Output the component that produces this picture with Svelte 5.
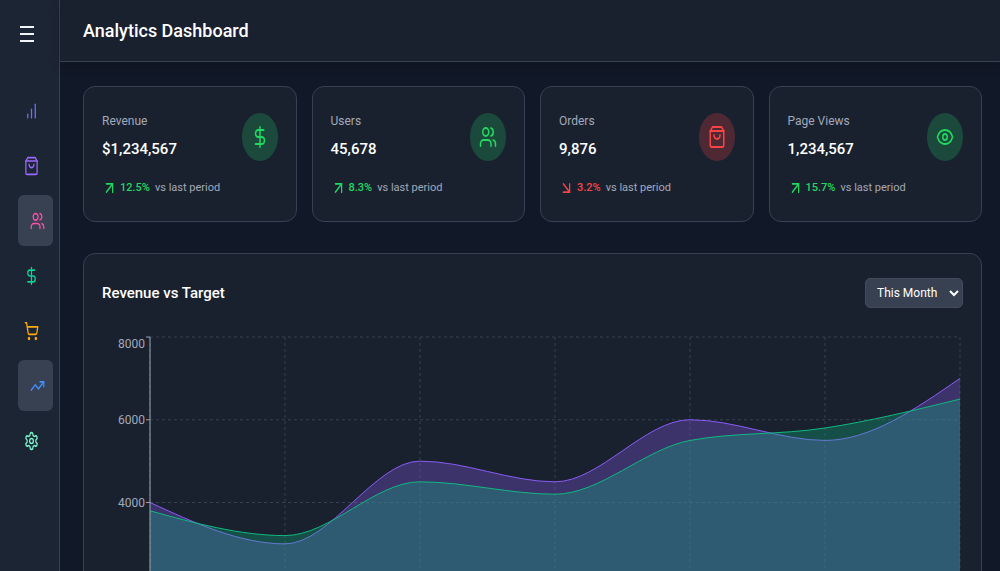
<script lang="ts">
    type Icon = "bars" | "bag" | "users" | "dollar" | "cart" | "trend" | "gear" | "eye" | "up" | "down";

    const icons: Record<Icon, string[]> = {
        bars: ["M12 20V10", "M18 20V4", "M6 20v-4"],
        bag: [
            "M6 2 3 6v14a2 2 0 0 0 2 2h14a2 2 0 0 0 2-2V6l-3-4Z",
            "M3 6h18",
            "M16 10a4 4 0 0 1-8 0",
        ],
        users: [
            "M16 21v-2a4 4 0 0 0-4-4H6a4 4 0 0 0-4 4v2",
            "M13 7a4 4 0 1 1-8 0 4 4 0 0 1 8 0",
            "M22 21v-2a4 4 0 0 0-3-3.87",
            "M16 3.13a4 4 0 0 1 0 7.75",
        ],
        dollar: ["M12 2v20", "M17 5H9.5a3.5 3.5 0 0 0 0 7h5a3.5 3.5 0 0 1 0 7H6"],
        cart: [
            "M9 21a1 1 0 1 1-2 0 1 1 0 0 1 2 0",
            "M20 21a1 1 0 1 1-2 0 1 1 0 0 1 2 0",
            "M2.05 2.05h2l2.66 12.42a2 2 0 0 0 2 1.58h9.78a2 2 0 0 0 1.95-1.57l1.65-7.43H5.12",
        ],
        trend: ["M22 7l-8.5 8.5-5-5L2 17", "M16 7h6v6"],
        gear: [
            "M12.22 2h-.44a2 2 0 0 0-2 2v.18a2 2 0 0 1-1 1.73l-.43.25a2 2 0 0 1-2 0l-.15-.08a2 2 0 0 0-2.73.73l-.22.38a2 2 0 0 0 .73 2.73l.15.1a2 2 0 0 1 1 1.72v.51a2 2 0 0 1-1 1.74l-.15.09a2 2 0 0 0-.73 2.73l.22.38a2 2 0 0 0 2.73.73l.15-.08a2 2 0 0 1 2 0l.43.25a2 2 0 0 1 1 1.73V20a2 2 0 0 0 2 2h.44a2 2 0 0 0 2-2v-.18a2 2 0 0 1 1-1.73l.43-.25a2 2 0 0 1 2 0l.15.08a2 2 0 0 0 2.73-.73l.22-.39a2 2 0 0 0-.73-2.73l-.15-.08a2 2 0 0 1-1-1.74v-.5a2 2 0 0 1 1-1.74l.15-.09a2 2 0 0 0 .73-2.73l-.22-.38a2 2 0 0 0-2.73-.73l-.15.08a2 2 0 0 1-2 0l-.43-.25a2 2 0 0 1-1-1.73V4a2 2 0 0 0-2-2z",
            "M15 12a3 3 0 1 1-6 0 3 3 0 0 1 6 0",
        ],
        eye: [
            "M2.06 12.35a1 1 0 0 1 0-.7 10.75 10.75 0 0 1 19.88 0 1 1 0 0 1 0 .7 10.75 10.75 0 0 1-19.88 0",
            "M15 12a3 3 0 1 1-6 0 3 3 0 0 1 6 0",
        ],
        up: ["M7 7h10v10", "M7 17 17 7"],
        down: ["m7 7 10 10", "M17 7v10H7"],
    };

    const navItems: { icon: Icon; label: string; color: string; active?: boolean }[] = [
        { icon: "bars", label: "Overview", color: "#6e71ff" },
        { icon: "bag", label: "Products", color: "#9c68ff" },
        { icon: "users", label: "Users", color: "#fb50a8", active: true },
        { icon: "dollar", label: "Sales", color: "#10d094" },
        { icon: "cart", label: "Orders", color: "#ffaa0c" },
        { icon: "trend", label: "Analytics", color: "#3f8dff", active: true },
        { icon: "gear", label: "Settings", color: "#78f5c8" },
    ];

    const stats: { title: string; value: string; change: string; rising: boolean; icon: Icon }[] = [
        { title: "Revenue", value: "$1,234,567", change: "12.5%", rising: true, icon: "dollar" },
        { title: "Users", value: "45,678", change: "8.3%", rising: true, icon: "users" },
        { title: "Orders", value: "9,876", change: "3.2%", rising: false, icon: "bag" },
        { title: "Page Views", value: "1,234,567", change: "15.7%", rising: true, icon: "eye" },
    ];

    const revenue = [4000, 3000, 5000, 4500, 6000, 5500, 7000];
    const target = [3800, 3200, 4500, 4200, 5500, 5800, 6500];
    const ticks = [8000, 6000, 4000];

    const plot = { left: 48, top: 5, right: 3, height: 331 };
    let range = $state("This Month");
    let width = $state(862);

    let plotRight = $derived(width - plot.right);
    let step = $derived((plotRight - plot.left) / (revenue.length - 1));

    const y = (v: number) => plot.top + plot.height * (1 - v / 8000);

    // Monotone cubic through evenly spaced points
    function curve(values: number[], dx: number) {
        const ys = values.map(y);
        const slopes = ys.slice(1).map((v, i) => (v - ys[i]) / dx);
        const last = ys.length - 1;
        const m = ys.map((_, i) => {
            if (i === 0 || i === last) return 0;
            const a = slopes[i - 1];
            const b = slopes[i];
            if (a * b <= 0) return 0;
            return Math.sign(a) * Math.min(Math.abs(a), Math.abs(b), Math.abs(a + b) / 4) * 2;
        });
        m[0] = (3 * slopes[0] - m[1]) / 2;
        m[last] = (3 * slopes[last - 1] - m[last - 1]) / 2;
        let d = `M${plot.left},${ys[0]}`;
        for (let i = 0; i < last; i++) {
            const x0 = plot.left + i * dx;
            const t = dx / 3;
            d += `C${x0 + t},${ys[i] + m[i] * t} ${x0 + dx - t},${ys[i + 1] - m[i + 1] * t} ${x0 + dx},${ys[i + 1]}`;
        }
        return d;
    }

    let series = $derived([
        { color: "#8b5cf6", d: curve(revenue, step) },
        { color: "#10b981", d: curve(target, step) },
    ]);
</script>

{#snippet glyph(name: Icon)}
    <svg class="icon" viewBox="0 0 24 24" preserveAspectRatio="none" aria-hidden="true">
        {#each icons[name] as d}
            <path {d} />
        {/each}
    </svg>
{/snippet}

<div class="app">
    <aside class="sidebar">
        <button class="menu" aria-label="Toggle menu">
            <span></span>
            <span></span>
            <span></span>
        </button>
        <nav>
            {#each navItems as item}
                <a href="#{item.icon}" class:active={item.active} aria-label={item.label} style:color={item.color}>
                    {@render glyph(item.icon)}
                </a>
            {/each}
        </nav>
    </aside>

    <div class="page">
        <header>
            <h1>Analytics Dashboard</h1>
        </header>

        <main>
            <section class="stats">
                {#each stats as stat}
                    <article class="card stat" class:falling={!stat.rising}>
                        <div class="stat-top">
                            <div>
                                <h3>{stat.title}</h3>
                                <p class="value">{stat.value}</p>
                            </div>
                            <div class="badge">{@render glyph(stat.icon)}</div>
                        </div>
                        <div class="change">
                            {@render glyph(stat.rising ? "up" : "down")}
                            <strong>{stat.change}</strong>
                            <span>vs last period</span>
                        </div>
                    </article>
                {/each}
            </section>

            <section class="card chart-card">
                <div class="chart-head">
                    <h2>Revenue vs Target</h2>
                    <select bind:value={range} aria-label="Period">
                        <option>This Month</option>
                    </select>
                </div>
                <div class="chart" bind:clientWidth={width}>
                    <svg {width} height="340">
                        <g class="grid">
                            {#each ticks as tick}
                                <line x1={plot.left} x2={plotRight} y1={y(tick)} y2={y(tick)} />
                            {/each}
                            {#each revenue as _, i}
                                <line
                                    x1={plot.left + i * step}
                                    x2={plot.left + i * step}
                                    y1={plot.top}
                                    y2={plot.top + plot.height}
                                />
                            {/each}
                        </g>
                        {#each series as s}
                            <path
                                d="{s.d}V{plot.top + plot.height}H{plot.left}Z"
                                fill={s.color}
                                fill-opacity="0.3"
                            />
                            <path d={s.d} fill="none" stroke={s.color} />
                        {/each}
                        <g class="axis">
                            <line x1={plot.left} x2={plot.left} y1={plot.top} y2={plot.top + plot.height} />
                            {#each ticks as tick}
                                <line x1={plot.left - 4} x2={plot.left} y1={y(tick)} y2={y(tick)} />
                                <text x={plot.left - 5} y={Math.max(y(tick), 12) + 4}>{tick}</text>
                            {/each}
                        </g>
                    </svg>
                </div>
            </section>
        </main>
    </div>
</div>

<style>
    :global(body) {
        background: #111827;
    }

    .app {
        display: flex;
        height: 100vh;
        overflow: hidden;
        color: #ffffff;
        font-family: Roboto, "Open Sans", sans-serif;
    }

    h1,
    h2,
    h3,
    p {
        margin: 0;
    }

    .icon {
        display: block;
        fill: none;
        stroke: currentColor;
        stroke-width: 2;
        stroke-linecap: round;
        stroke-linejoin: round;
    }

    .sidebar {
        flex: none;
        box-sizing: border-box;
        width: 60px;
        padding: 16px 6px 0 12px;
        background: #1c2533;
        border-right: 1px solid #374151;
    }

    .menu {
        display: flex;
        flex-direction: column;
        gap: 5px;
        padding: 10px 8px;
        border: 0;
        background: none;
    }

    .menu span {
        width: 14px;
        height: 2px;
        background: #f3f4f6;
    }

    nav {
        display: flex;
        flex-direction: column;
        gap: 4px;
        margin-top: 33px;
    }

    nav a {
        display: flex;
        align-items: center;
        width: 23px;
        height: 51px;
        padding-left: 12px;
        border-radius: 6px;
    }

    nav a.active {
        margin-left: 6px;
        background: #374151;
    }

    nav .icon {
        width: 15px;
        height: 20px;
    }

    .page {
        flex: 1;
        display: flex;
        flex-direction: column;
        min-width: 0;
    }

    header {
        padding: 16px 23px;
        background: #19212f;
        border-bottom: 1px solid #374151;
        box-shadow: 0 4px 12px rgba(0, 0, 0, 0.15);
    }

    h1 {
        font-size: 18px;
        line-height: 29px;
        font-weight: 500;
    }

    main {
        flex: 1;
        min-height: 0;
        padding: 24px 18px 24px 23px;
        overflow-y: auto;
        scrollbar-width: none;
    }

    .card {
        background: #19212f;
        border: 1px solid #374151;
        border-radius: 12px;
    }

    .stats {
        display: grid;
        grid-template-columns: repeat(4, 1fr);
        gap: 15px;
        margin-bottom: 31px;
    }

    .stat {
        padding: 23px 18px;
        color: #22d860;
    }

    .stat.falling {
        color: #f84444;
    }

    .stat-top {
        display: flex;
        align-items: center;
        justify-content: space-between;
    }

    h3 {
        color: #a3a9b8;
        font-size: 12px;
        line-height: 22px;
        font-weight: 400;
    }

    .value {
        margin-top: 3px;
        color: #ffffff;
        font-size: 15px;
        line-height: 28px;
        font-weight: 500;
    }

    .badge {
        display: grid;
        place-items: center;
        width: 36px;
        height: 48px;
        border-radius: 50%;
        background: rgba(34, 197, 94, 0.25);
    }

    .falling .badge {
        background: rgba(239, 68, 68, 0.25);
    }

    .badge .icon {
        width: 18px;
        height: 24px;
    }

    .change {
        display: flex;
        align-items: center;
        margin-top: 15px;
        font-size: 11px;
        line-height: 20px;
    }

    .change .icon {
        width: 15px;
        height: 20px;
        margin-right: 3px;
    }

    .change strong {
        margin-right: 5px;
        font-weight: 500;
    }

    .change span {
        color: #a3a9b8;
    }

    .chart-card {
        padding: 24px 18px;
    }

    .chart-head {
        display: flex;
        align-items: center;
        justify-content: space-between;
        margin-bottom: 24px;
    }

    h2 {
        font-size: 15px;
        line-height: 28px;
        font-weight: 500;
    }

    select {
        width: 98px;
        height: 30px;
        padding: 0 0 0 7px;
        border: 1px solid #414b5a;
        border-radius: 5px;
        background: #374151;
        color: #ffffff;
        font: inherit;
        font-size: 12px;
    }

    .chart svg {
        display: block;
    }

    .grid line {
        stroke: #374151;
        stroke-dasharray: 3 3;
    }

    .axis line {
        stroke: #9ca3af;
    }

    .axis text {
        fill: #a3a9b8;
        font-size: 12px;
        text-anchor: end;
    }
</style>
